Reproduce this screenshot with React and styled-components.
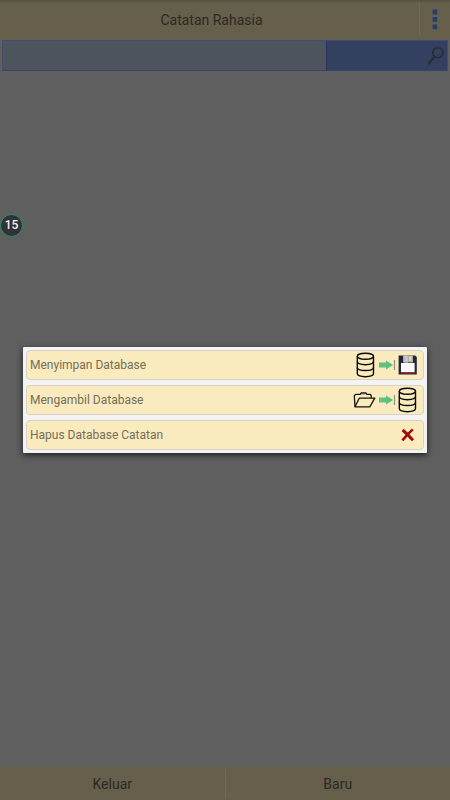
import React, { useState } from 'react'
import styled, { createGlobalStyle } from 'styled-components'

const DatabaseIcon = () => (
  <svg width="20" height="26" viewBox="0 0 20 26" fill="none" stroke="#0c0c08" strokeWidth="1.4">
    <ellipse cx="9.4" cy="4.2" rx="8.1" ry="3" />
    <path d="M1.3 4.2v17.4c0 1.8 3.6 3.1 8.1 3.1s8.1-1.3 8.1-3.1V4.2" />
    <path d="M1.3 9.6c0 1.8 3.6 3.1 8.1 3.1s8.1-1.3 8.1-3.1" />
    <path d="M1.3 15.4c0 1.8 3.6 3.1 8.1 3.1s8.1-1.3 8.1-3.1" />
  </svg>
)

const ArrowIcon = () => (
  <svg width="18" height="12" viewBox="0 0 18 12">
    <path d="M1 3.6h7V1.4L15.2 6 8 10.6V8.4H1z" fill="#5ec083" />
    <path d="M16.5 1v10" stroke="#98907a" strokeWidth="1.2" />
  </svg>
)

const FloppyIcon = () => (
  <svg width="20" height="20" viewBox="0 0 20 20">
    <path d="M.6.5h16.6L18.8 2v17.5H.6z" fill="#242838" />
    <path d="M5 .5h10v7H5z" fill="#aaaaac" />
    <path d="M6 .5h4v7H6z" fill="#c4c4c6" />
    <path d="M11 1.2h2.6v5H11z" fill="#e8d590" />
    <path d="M3 8h13.6v9.4H3z" fill="#fcfcff" />
    <path d="M3 17.2h13.6v1.3H3z" fill="#ab1c25" />
  </svg>
)

const FolderIcon = () => (
  <svg width="24" height="18" viewBox="0 0 24 18" fill="none" stroke="#16150f" strokeWidth="1.3" strokeLinejoin="round">
    <path d="M3 15.8L2.3 4.8 3.6 3.4h4.6l1-1.4h4.6l1.2 1.4h3.4l.8 1.2v2.6" />
    <path d="M3 15.8L7.2 7.2h15.6l-5 8.6z" />
    <path d="M9 2.4h4.6" stroke="#45515c" strokeWidth="1.8" />
  </svg>
)

const CrossIcon = () => (
  <svg width="20" height="14" viewBox="0 0 20 14" fill="none" stroke="#9f0910">
    <path d="M4.6 2C8 4.8 11 7.8 15 12.2" strokeWidth="3" />
    <path d="M14.8 1.4C11 4.8 8 8 4.4 12.4" strokeWidth="2.6" />
  </svg>
)

const SearchIcon = () => (
  <svg width="18" height="20" viewBox="0 0 18 20" fill="none" stroke="#2b2c30">
    <circle cx="10.8" cy="6.7" r="5" strokeWidth="1.6" />
    <path d="M7.4 10.6L1.2 18.4" strokeWidth="2.2" />
  </svg>
)

const MenuIcon = () => (
  <svg width="6" height="22" viewBox="0 0 6 22" fill="#213f72">
    <path d="M.6.6h4.6v4.8H.6zM.6 8h4.6v4.8H.6zM.6 15.4h4.6v4.8H.6z" />
  </svg>
)

const items = [
  { label: 'Menyimpan Database', icons: [DatabaseIcon, ArrowIcon, FloppyIcon] },
  { label: 'Mengambil Database', icons: [FolderIcon, ArrowIcon, DatabaseIcon] },
  { label: 'Hapus Database Catatan', icons: [CrossIcon] },
]

function App() {
  const [query, setQuery] = useState('')

  return (
    <Page>
      <GlobalStyle />
      <Header>
        <Title>Catatan Rahasia</Title>
        <MenuButton aria-label="Menu"><MenuIcon /></MenuButton>
      </Header>
      <SearchBar>
        <SearchInput aria-label="Cari" value={query} onChange={(e) => setQuery(e.target.value)} />
        <SearchButton aria-label="Cari catatan"><SearchIcon /></SearchButton>
      </SearchBar>
      <Content />
      <Footer>
        <FooterButton>Keluar</FooterButton>
        <FooterButton>Baru</FooterButton>
      </Footer>
      <Counter>15</Counter>
      <Overlay>
        <Dialog role="dialog" aria-label="Database">
          {items.map(({ label, icons }) => (
            <DialogItem key={label}>
              <span>{label}</span>
              <Icons>
                {icons.map((Icon, i) => <Icon key={i} />)}
              </Icons>
            </DialogItem>
          ))}
        </Dialog>
      </Overlay>
    </Page>
  )
}

export default App

const GlobalStyle = createGlobalStyle`
  * {
    box-sizing: border-box;
  }
  body {
    margin: 0;
    background: #5f5f5f;
    font-family: Roboto, sans-serif;
  }
  button, input {
    font-family: inherit;
    margin: 0;
  }
  button {
    cursor: pointer;
  }
  svg {
    display: block;
    flex: none;
  }
`

const Page = styled.div`
  display: flex;
  flex-direction: column;
  min-height: 100vh;
`

const Header = styled.header`
  display: flex;
  align-items: center;
  height: 39px;
  background: linear-gradient(#53503f, #665f4b 3px, #665f4b);
`

const Title = styled.h1`
  flex: 1;
  margin: 0;
  padding-left: 4px;
  color: #2b2a26;
  font-size: 14px;
  font-weight: 400;
  line-height: 20px;
  text-align: center;
`

const MenuButton = styled.button`
  display: flex;
  justify-content: center;
  align-items: center;
  width: 31px;
  height: 33px;
  padding: 0;
  border: 0;
  border-left: 1px solid #6b6a60;
  background: none;
`

const SearchBar = styled.div`
  display: flex;
  height: 31px;
  margin: 1px 2px 0;
  border: 1px solid #464d66;
  border-bottom-color: #3a4270;
`

const SearchInput = styled.input`
  flex: 8;
  min-width: 0;
  padding: 0 6px;
  border: 0;
  border-right: 1px solid #223560;
  outline: none;
  background: #4e545d;
  color: #222;
  font-size: 14px;
`

const SearchButton = styled.button`
  display: flex;
  flex: 3;
  justify-content: flex-end;
  align-items: center;
  padding: 0 2px;
  border: 0;
  background: #33405f;
`

const Content = styled.main`
  flex: 1;
`

const Footer = styled.footer`
  display: flex;
  height: 33px;
  padding: 2px 0;
  background: #665f4b;
`

const FooterButton = styled.button`
  flex: 1;
  padding: 0;
  border: 0;
  background: none;
  color: #2b2a26;
  font-size: 14px;
  line-height: 20px;

  & + & {
    border-left: 1px solid #6b6a66;
  }
`

const Counter = styled.div`
  position: fixed;
  top: 214px;
  left: 0;
  width: 23px;
  height: 23px;
  border: 1px solid #1c9478;
  border-radius: 50%;
  background: #333335;
  color: #f2f2f2;
  font-size: 12px;
  font-weight: 500;
  line-height: 21px;
  text-align: center;
`

const Overlay = styled.div`
  position: fixed;
  inset: 0;
  display: flex;
  justify-content: center;
  align-items: center;
  padding: 0 23px;
`

const Dialog = styled.div`
  display: flex;
  flex-direction: column;
  gap: 5px;
  width: 100%;
  padding: 3px;
  border-radius: 1px;
  background: #f3f3f3;
  box-shadow: 0 2px 6px rgba(0, 0, 0, 0.7);
`

const DialogItem = styled.button`
  display: flex;
  justify-content: space-between;
  align-items: center;
  height: 30px;
  padding: 0 5px 0 3px;
  border: 1px solid #d6d3c6;
  border-radius: 4px;
  background: #f9ebbd;
  color: #756e58;
  font-size: 12px;
  line-height: 16px;
`

const Icons = styled.span`
  display: flex;
  align-items: center;
  gap: 2px;
`
